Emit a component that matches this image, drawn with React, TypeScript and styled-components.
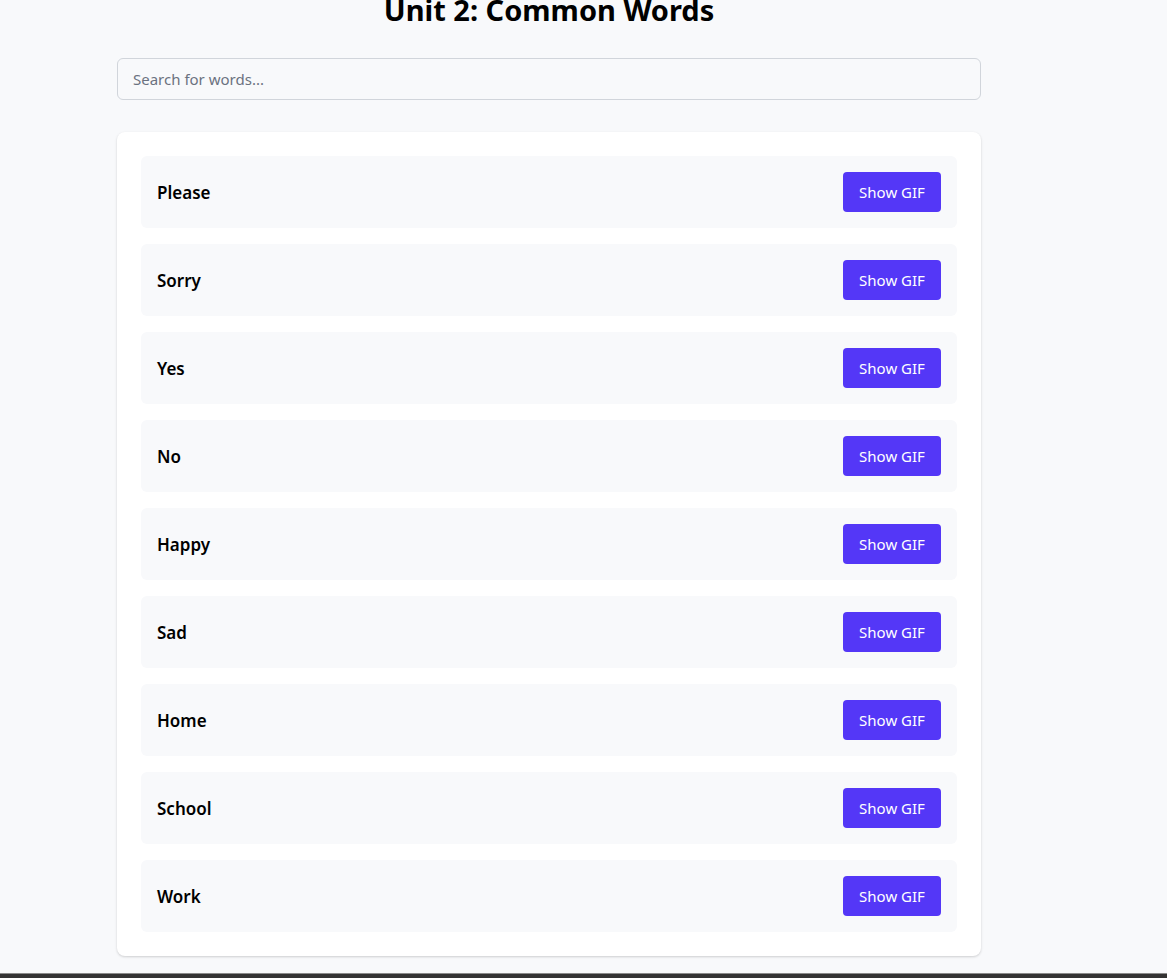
import React from "react";
import styled, { createGlobalStyle } from "styled-components";

const GlobalStyle = createGlobalStyle`
  html, body {
    margin: 0;
    padding: 0;
    background: #f8f9fb;
    font-family: "Noto Sans", "Open Sans", "Liberation Sans", sans-serif;
    overflow: hidden;
  }
  * { box-sizing: border-box; }
`;

const Page = styled.div`
  width: 1098px;
  min-height: 978px;
  display: flex;
  flex-direction: column;
  align-items: center;
`;

const Container = styled.div`
  width: 864px;
  display: flex;
  flex-direction: column;
`;

const Title = styled.h1`
  margin: -7px 0 0;
  font-size: 29px;
  line-height: 34px;
  font-weight: 700;
  color: #000;
  text-align: center;
`;

const Search = styled.input`
  margin-top: 31px;
  height: 42px;
  width: 100%;
  border: 1px solid #d1d5db;
  border-radius: 6px;
  padding: 0 15px;
  font-family: inherit;
  font-size: 15px;
  background: #f8f9fb;
  color: #111;
  outline: none;
  &::placeholder { color: #6b7280; }
`;

const Card = styled.div`
  margin-top: 32px;
  background: #fff;
  border-radius: 8px;
  box-shadow: 0 1px 3px rgba(0,0,0,0.12), 0 1px 2px rgba(0,0,0,0.06);
  padding: 24px;
  display: flex;
  flex-direction: column;
  gap: 16px;
`;

const Row = styled.div`
  height: 72px;
  background: #f8f9fb;
  border-radius: 6px;
  padding: 0 16px;
  display: flex;
  align-items: center;
  justify-content: space-between;
`;

const Word = styled.span`
  font-size: 17px;
  font-weight: 600;
  color: #000;
`;

const Button = styled.button`
  width: 98px;
  height: 40px;
  border: none;
  border-radius: 4px;
  background: #5437f7;
  color: #fff;
  font-family: inherit;
  font-size: 15px;
  cursor: pointer;
`;

const BottomBar = styled.div`
  position: fixed;
  left: 0;
  right: 0;
  bottom: 0;
  height: 5px;
  background: #333;
  border-top: 1px solid #8a8a8a;
`;

const words = ["Please", "Sorry", "Yes", "No", "Happy", "Sad", "Home", "School", "Work"];

export default function App() {
  return (
    <>
      <GlobalStyle />
      <Page>
        <Container>
          <Title>Unit 2: Common Words</Title>
          <Search placeholder="Search for words..." />
          <Card>
            {words.map((w) => (
              <Row key={w}>
                <Word>{w}</Word>
                <Button>Show GIF</Button>
              </Row>
            ))}
          </Card>
        </Container>
      </Page>
      <BottomBar />
    </>
  );
}
